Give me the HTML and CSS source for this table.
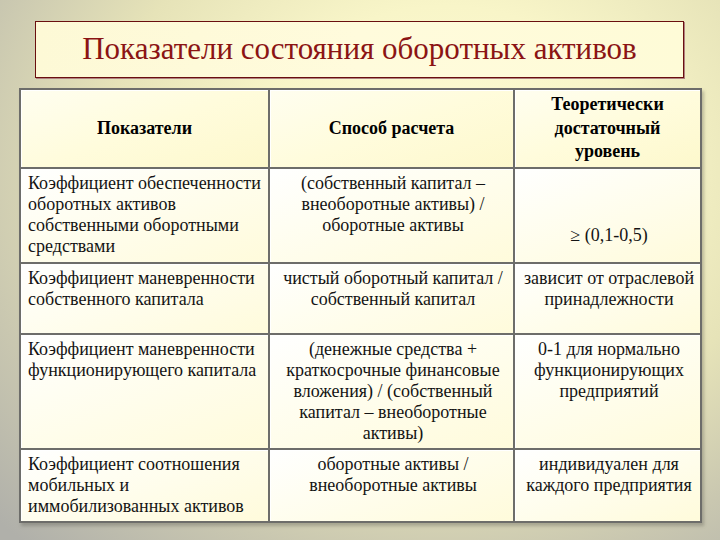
FILE: index.html
```html
<!DOCTYPE html>
<html>
<head>
<meta charset="utf-8">
<link rel="stylesheet" href="styles.css">
</head>
<body>
<div class="slide">
  <div class="title-box"><h1 class="title">Показатели состояния оборотных активов</h1></div>
  <table class="grid">
    <colgroup><col class="c1"><col class="c2"><col class="c3"></colgroup>
    <tr class="r0">
      <th class="hd">Показатели</th>
      <th class="hd">Способ расчета</th>
      <th class="hd">Теоретически<br>достаточный<br>уровень</th>
    </tr>
    <tr class="r1">
      <td class="cell left">Коэффициент обеспеченности<br>оборотных активов<br>собственными оборотными<br>средствами</td>
      <td class="cell mid">(собственный капитал –<br>внеоборотные активы) /<br>оборотные активы</td>
      <td class="cell mid"><p class="level">≥ (0,1-0,5)</p></td>
    </tr>
    <tr class="r2">
      <td class="cell left">Коэффициент маневренности<br>собственного капитала</td>
      <td class="cell mid">чистый оборотный капитал /<br>собственный капитал</td>
      <td class="cell mid">зависит от отраслевой<br>принадлежности</td>
    </tr>
    <tr class="r3">
      <td class="cell left">Коэффициент маневренности<br>функционирующего капитала</td>
      <td class="cell mid">(денежные средства +<br>краткосрочные финансовые<br>вложения) / (собственный<br>капитал – внеоборотные<br>активы)</td>
      <td class="cell mid">0-1 для нормально<br>функционирующих<br>предприятий</td>
    </tr>
    <tr class="r4">
      <td class="cell left">Коэффициент соотношения<br>мобильных и<br>иммобилизованных активов</td>
      <td class="cell mid">оборотные активы /<br>внеоборотные активы</td>
      <td class="cell mid">индивидуален для<br>каждого предприятия</td>
    </tr>
  </table>
</div>
</body>
</html>
```
FILE: styles.css
```css
html, body {
  margin: 0;
  padding: 0;
}
body {
  width: 720px;
  height: 540px;
  overflow: hidden;
  font-family: "Times New Roman", "Liberation Serif", serif;
}
.slide {
  width: 720px;
  height: 540px;
  box-sizing: border-box;
  padding-top: 21px;
  background:
    radial-gradient(ellipse 620px 520px at 62% 30%, #fefcd6 0%, #f8f5c8 30%, #e6e3b8 55%, #c9c7b0 78%, #b0b0aa 100%);
}
.title-box {
  margin-left: 35px;
  width: 649px;
  height: 57px;
  box-sizing: border-box;
  border: 1px solid #6a0f0f;
  box-shadow: 1px 1px 0 #b08080;
  background: linear-gradient(90deg, #fdf9d6, #fffbdc 50%, #fefbd7);
  text-align: center;
}
.title {
  margin: 0;
  font-family: "Times New Roman", "Liberation Serif", serif;
  font-weight: normal;
  font-size: 31px;
  line-height: 53px;
  color: #8b1414;
}
.grid {
  margin-top: 10px;
  margin-left: 19px;
  width: 681px;
  border-collapse: collapse;
  border: 2px solid #6d6d6a;
  table-layout: fixed;
  box-shadow: 2px 3px 3px rgba(90, 90, 80, 0.35);
}
.c1 { width: 249px; }
.c2 { width: 245px; }
.c3 { width: 187px; }
.cell, .hd {
  border: 2px solid #6d6d6a;
  box-shadow: inset 1px 1px 0 #ffffff;
  white-space: nowrap;
}
.cell {
  font-family: "Times New Roman", "Liberation Serif", serif;
  background: linear-gradient(160deg, #ffffff 0%, #fffef2 35%, #fffbdb 100%);
  padding: 4px 4px 0 7px;
  font-size: 18px;
  line-height: 21px;
  color: #141414;
  vertical-align: top;
}
.hd {
  font-family: "Times New Roman", "Liberation Serif", serif;
  font-size: 18px;
  line-height: 23.5px;
  font-weight: bold;
  vertical-align: middle;
  text-align: center;
  padding: 0 4px;
  color: #000;
  background: linear-gradient(160deg, #fffef0 0%, #fffcdc 50%, #fdf8cc 100%);
}
.left { text-align: left; }
.mid { text-align: center; }
.r0 { height: 79px; }
.r1 { height: 95px; }
.r2 { height: 71px; }
.r3 { height: 115px; }
.r4 { height: 73px; }
.level {
  font-family: "Times New Roman", "Liberation Serif", serif;
  margin: 52px 0 0 0;
}
```
